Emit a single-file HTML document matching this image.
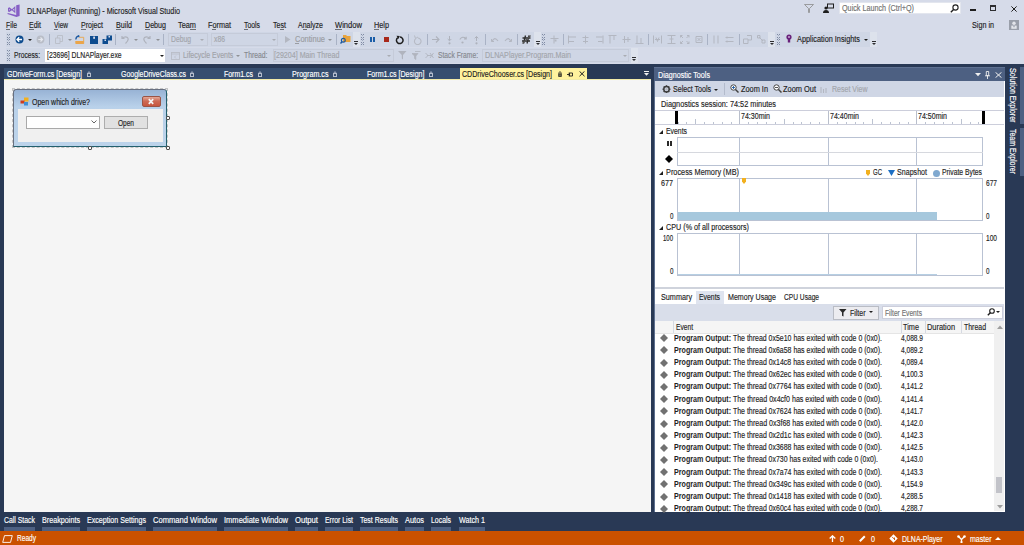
<!DOCTYPE html><html><head><meta charset="utf-8"><style>
html,body{margin:0;padding:0;}
body{width:1024px;height:545px;position:relative;overflow:hidden;background:#D6DBE9;font-family:"Liberation Sans",sans-serif;}
body>div,body>span,body>svg{position:absolute;}
.t{white-space:nowrap;line-height:1;transform-origin:0 0;-webkit-text-stroke:0.15px currentColor;}
</style></head><body>
<svg style="left:0px;top:0px" width="24" height="20" viewBox="0 0 24 20"><path d="M16.2 5.2 L19.6 4.6 L19.6 16 L16.4 16.9 L7.4 13.9 L7.8 13.1 L16.2 15 Z" fill="#865FC5"/><path d="M8 8 L9.4 7.3 L11.9 9.3 L15.3 6.1 L15.3 13.2 L11.9 10.3 L9.4 12.1 L8 11.4 Z M9.1 8.9 L9.1 10.4 L10.2 9.7 Z M12.9 9.8 L14.3 8.5 L14.3 11 Z" fill="#865FC5" fill-rule="evenodd"/></svg>
<span class="t" style="left:27px;top:7.00px;font-size:8.5px;color:#1e1e1e;transform:scaleX(0.8485);">DLNAPlayer (Running) - Microsoft Visual Studio</span>
<svg style="left:804px;top:4px" width="10" height="9" viewBox="0 0 10 9"><path d="M0.5 0.5 L9.5 0.5 L5.5 4.5 L5.5 8.5 L4.5 8.5 L4.5 4.5 Z" fill="none" stroke="#8a8a8a" stroke-width="0.8"/></svg>
<svg style="left:823px;top:3px" width="11" height="10" viewBox="0 0 11 10"><circle cx="3" cy="5" r="1.6" fill="#1e1e1e"/><path d="M0 10 Q0 7 3 7 Q6 7 6 10 Z" fill="#1e1e1e"/><rect x="4.5" y="1" width="6" height="4" fill="none" stroke="#1e1e1e" stroke-width="1"/></svg>
<div style="left:839px;top:2px;width:122px;height:12px;background:#fff;box-sizing:border-box;border:1px solid #e3e6ee;"></div>
<span class="t" style="left:842px;top:4.00px;font-size:8.5px;color:#717171;transform:scaleX(0.8491);">Quick Launch (Ctrl+Q)</span>
<svg style="left:950px;top:4px" width="9" height="9" viewBox="0 0 9 9"><circle cx="5.5" cy="3.5" r="2.6" fill="none" stroke="#1e1e1e" stroke-width="1.1"/><path d="M3.6 5.4 L0.8 8.2" stroke="#1e1e1e" stroke-width="1.4"/></svg>
<div style="left:970px;top:9px;width:5.5px;height:1.6px;background:#1e1e1e;"></div>
<div style="left:990px;top:5px;width:6px;height:6px;background:transparent;box-sizing:border-box;border:1px solid #2d2d30;border-top-width:2px;"></div>
<svg style="left:1010.5px;top:5.5px" width="6" height="6" viewBox="0 0 6 6"><path d="M0.4 0.4 L5.6 5.6 M5.6 0.4 L0.4 5.6" stroke="#1e1e1e" stroke-width="1"/></svg>
<span class="t" style="left:6px;top:21.00px;font-size:8.5px;color:#1e1e1e;transform:scaleX(0.8031);">File</span>
<div style="left:6.0px;top:29px;width:4.17px;height:1px;background:#6d6f75;"></div>
<span class="t" style="left:29px;top:21.00px;font-size:8.5px;color:#1e1e1e;transform:scaleX(0.8193);">Edit</span>
<div style="left:29.0px;top:29px;width:4.65px;height:1px;background:#6d6f75;"></div>
<span class="t" style="left:54px;top:21.00px;font-size:8.5px;color:#1e1e1e;transform:scaleX(0.7662);">View</span>
<div style="left:54.0px;top:29px;width:4.34px;height:1px;background:#6d6f75;"></div>
<span class="t" style="left:81px;top:21.00px;font-size:8.5px;color:#1e1e1e;transform:scaleX(0.8316);">Project</span>
<div style="left:81.0px;top:29px;width:4.71px;height:1px;background:#6d6f75;"></div>
<span class="t" style="left:116px;top:21.00px;font-size:8.5px;color:#1e1e1e;transform:scaleX(0.8465);">Build</span>
<div style="left:116.0px;top:29px;width:4.8px;height:1px;background:#6d6f75;"></div>
<span class="t" style="left:145px;top:21.00px;font-size:8.5px;color:#1e1e1e;transform:scaleX(0.8384);">Debug</span>
<div style="left:145.0px;top:29px;width:5.15px;height:1px;background:#6d6f75;"></div>
<span class="t" style="left:178px;top:21.00px;font-size:8.5px;color:#1e1e1e;transform:scaleX(0.8660);">Team</span>
<div style="left:189.87px;top:29px;width:6.13px;height:1px;background:#6d6f75;"></div>
<span class="t" style="left:208px;top:21.00px;font-size:8.5px;color:#1e1e1e;transform:scaleX(0.8544);">Format</span>
<div style="left:212.44px;top:29px;width:4.04px;height:1px;background:#6d6f75;"></div>
<span class="t" style="left:244px;top:21.00px;font-size:8.5px;color:#1e1e1e;transform:scaleX(0.8063);">Tools</span>
<div style="left:244.0px;top:29px;width:4.19px;height:1px;background:#6d6f75;"></div>
<span class="t" style="left:273px;top:21.00px;font-size:8.5px;color:#1e1e1e;transform:scaleX(0.8339);">Test</span>
<div style="left:280.49px;top:29px;width:3.54px;height:1px;background:#6d6f75;"></div>
<span class="t" style="left:298px;top:21.00px;font-size:8.5px;color:#1e1e1e;transform:scaleX(0.8267);">Analyze</span>
<div style="left:302.69px;top:29px;width:3.91px;height:1px;background:#6d6f75;"></div>
<span class="t" style="left:335px;top:21.00px;font-size:8.5px;color:#1e1e1e;transform:scaleX(0.8931);">Window</span>
<div style="left:335.0px;top:29px;width:7.16px;height:1px;background:#6d6f75;"></div>
<span class="t" style="left:374px;top:21.00px;font-size:8.5px;color:#1e1e1e;transform:scaleX(0.8580);">Help</span>
<div style="left:374.0px;top:29px;width:5.27px;height:1px;background:#6d6f75;"></div>
<span class="t" style="left:972px;top:21.00px;font-size:8.5px;color:#1e1e1e;transform:scaleX(0.8465);">Sign in</span>
<svg style="left:1008.5px;top:19.5px" width="10" height="10" viewBox="0 0 10 10"><rect x="0" y="0" width="10" height="10" fill="#9a9faa"/><circle cx="5" cy="3.2" r="1.7" fill="#e3e5ea"/><rect x="2.3" y="5.6" width="5.4" height="3.2" fill="#e3e5ea"/><rect x="4.4" y="5.6" width="1.2" height="1.6" fill="#9a9faa"/></svg>
<div style="left:6px;top:32px;width:864px;height:15px;background:#CFD6E5;"></div>
<div style="left:6px;top:48px;width:625px;height:15px;background:#CFD6E5;"></div>
<svg style="left:7px;top:34px" width="3" height="11" viewBox="0 0 3 11"><rect x="0" y="0" width="1" height="1" fill="#7f8aa3"/><rect x="2" y="0" width="1" height="1" fill="#7f8aa3"/><rect x="1" y="1" width="1" height="1" fill="#a3adc2"/><rect x="0" y="3" width="1" height="1" fill="#7f8aa3"/><rect x="2" y="3" width="1" height="1" fill="#7f8aa3"/><rect x="1" y="4" width="1" height="1" fill="#a3adc2"/><rect x="0" y="5" width="1" height="1" fill="#7f8aa3"/><rect x="2" y="5" width="1" height="1" fill="#7f8aa3"/><rect x="1" y="6" width="1" height="1" fill="#a3adc2"/><rect x="0" y="8" width="1" height="1" fill="#7f8aa3"/><rect x="2" y="8" width="1" height="1" fill="#7f8aa3"/><rect x="1" y="9" width="1" height="1" fill="#a3adc2"/><rect x="0" y="10" width="1" height="1" fill="#7f8aa3"/><rect x="2" y="10" width="1" height="1" fill="#7f8aa3"/></svg>
<svg style="left:15px;top:35px" width="9" height="9" viewBox="0 0 9 9"><circle cx="4.5" cy="4.5" r="4" fill="#0e4c8f"/><path d="M2 4.5 H7 M4.2 2.3 L2 4.5 L4.2 6.7" stroke="#fff" stroke-width="1.3" fill="none"/></svg>
<svg style="left:28px;top:39px" width="4" height="2" viewBox="0 0 4 2"><path d="M0 0 H4 L2 2 Z" fill="#1e1e1e"/></svg>
<svg style="left:36px;top:35px" width="9" height="9" viewBox="0 0 9 9"><circle cx="4.5" cy="4.5" r="3.9" fill="#b9bdc7"/><path d="M2.3 4.5 H6.5 M4.5 2.5 L6.5 4.5 L4.5 6.5" stroke="#e4e7ee" stroke-width="1.2" fill="none"/></svg>
<div style="left:49px;top:34px;width:1px;height:11px;background:#a9b2c5;"></div>
<svg style="left:55px;top:35px" width="8" height="9" viewBox="0 0 8 9"><path d="M0.5 3 H5 V8.5 H0.5 Z M2.5 3 V0.5 H7.5 V6.5 H5" fill="none" stroke="#b9bdc6" stroke-width="0.9"/></svg>
<svg style="left:68px;top:39px" width="4" height="2" viewBox="0 0 4 2"><path d="M0 0 H4 L2 2 Z" fill="#8f9196"/></svg>
<svg style="left:75px;top:35px" width="10" height="9" viewBox="0 0 10 9"><path d="M4 2.3 H8.7 V8.5 H0.8 V6" fill="none" stroke="#eaa54a" stroke-width="0.9"/><rect x="0.8" y="6" width="8" height="2.8" fill="#eaa54a"/><path d="M0.8 4.5 Q1 1.2 4 0.8" fill="none" stroke="#1e5aa0" stroke-width="1.3"/><path d="M2.8 0 L5 1 L3.3 2.6 Z" fill="#1e5aa0"/></svg>
<svg style="left:89.5px;top:35.5px" width="8" height="8" viewBox="0 0 8 8"><path d="M0 0 H8 V8 H0 Z" fill="#0e4c8f"/><rect x="3.2" y="0.6" width="1.8" height="2.2" fill="#d6dbe9"/></svg>
<svg style="left:101.5px;top:35px" width="10" height="9" viewBox="0 0 10 9"><rect x="4.5" y="0.5" width="5.5" height="5" fill="#0e4c8f"/><rect x="6.5" y="1" width="1.5" height="1.5" fill="#d6dbe9"/><rect x="0.5" y="4" width="5.5" height="5" fill="#0e4c8f"/><rect x="2.5" y="4.5" width="1.5" height="1.5" fill="#d6dbe9"/></svg>
<div style="left:115px;top:34px;width:1px;height:11px;background:#a9b2c5;"></div>
<svg style="left:121px;top:35px" width="9" height="9" viewBox="0 0 9 9"><path d="M1 1 V3.5 H3.5 M1.3 3.2 Q4 0.8 6.5 2.5 Q8.5 5 4.5 8.5" fill="none" stroke="#aeb2bc" stroke-width="1.2"/></svg>
<svg style="left:134px;top:39px" width="4" height="2" viewBox="0 0 4 2"><path d="M0 0 H4 L2 2 Z" fill="#8f9196"/></svg>
<svg style="left:142px;top:35px" width="9" height="9" viewBox="0 0 9 9"><path d="M8 1 V3.5 H5.5 M7.7 3.2 Q5 0.8 2.5 2.5 Q0.5 5 4.5 8.5" fill="none" stroke="#aeb2bc" stroke-width="1.2"/></svg>
<svg style="left:156px;top:39px" width="4" height="2" viewBox="0 0 4 2"><path d="M0 0 H4 L2 2 Z" fill="#8f9196"/></svg>
<div style="left:163px;top:34px;width:1px;height:11px;background:#a9b2c5;"></div>
<div style="left:168px;top:33px;width:40px;height:13px;background:transparent;box-sizing:border-box;border:1px solid #c5cbd9;"></div>
<span class="t" style="left:171px;top:35.00px;font-size:8.5px;color:#a2a5ab;transform:scaleX(0.7985);">Debug</span>
<svg style="left:200px;top:39px" width="4" height="2" viewBox="0 0 4 2"><path d="M0 0 H4 L2 2 Z" fill="#a9acb3"/></svg>
<div style="left:211px;top:33px;width:67px;height:13px;background:transparent;box-sizing:border-box;border:1px solid #c5cbd9;"></div>
<span class="t" style="left:213.5px;top:35.00px;font-size:8.5px;color:#a2a5ab;transform:scaleX(0.8026);">x86</span>
<svg style="left:272px;top:39px" width="4" height="2" viewBox="0 0 4 2"><path d="M0 0 H4 L2 2 Z" fill="#a9acb3"/></svg>
<svg style="left:284.5px;top:36px" width="6" height="7" viewBox="0 0 6 7"><path d="M0 0 L5.5 3.5 L0 7 Z" fill="#b3b7c1"/></svg>
<span class="t" style="left:294.5px;top:35.00px;font-size:8.5px;color:#9a9ca2;transform:scaleX(0.8817);">Continue</span>
<div style="left:295px;top:43px;width:4px;height:0.8px;background:#9a9ca2;"></div>
<svg style="left:328px;top:39px" width="4" height="2" viewBox="0 0 4 2"><path d="M0 0 H4 L2 2 Z" fill="#8f9196"/></svg>
<div style="left:335.5px;top:34px;width:1px;height:11px;background:#a9b2c5;"></div>
<svg style="left:340px;top:34px" width="11" height="10" viewBox="0 0 11 10"><path d="M3 1 H6 L7 2 H10.5 V8 H3 Z" fill="#e8a33d"/><circle cx="3.3" cy="6.3" r="1.9" fill="none" stroke="#1e5aa0" stroke-width="1.2"/><path d="M2 7.8 L0.5 9.5" stroke="#1e5aa0" stroke-width="1.4"/></svg>
<div style="left:353px;top:32px;width:7px;height:15px;background:#DDE2EC;"></div>
<div style="left:354px;top:41px;width:4px;height:1px;background:#2d2d30;"></div>
<svg style="left:354px;top:43px" width="4" height="2" viewBox="0 0 4 2"><path d="M0 0 H4 L2 2 Z" fill="#2d2d30"/></svg>
<svg style="left:361px;top:34px" width="3" height="11" viewBox="0 0 3 11"><rect x="0" y="0" width="1" height="1" fill="#7f8aa3"/><rect x="2" y="0" width="1" height="1" fill="#7f8aa3"/><rect x="1" y="1" width="1" height="1" fill="#a3adc2"/><rect x="0" y="3" width="1" height="1" fill="#7f8aa3"/><rect x="2" y="3" width="1" height="1" fill="#7f8aa3"/><rect x="1" y="4" width="1" height="1" fill="#a3adc2"/><rect x="0" y="5" width="1" height="1" fill="#7f8aa3"/><rect x="2" y="5" width="1" height="1" fill="#7f8aa3"/><rect x="1" y="6" width="1" height="1" fill="#a3adc2"/><rect x="0" y="8" width="1" height="1" fill="#7f8aa3"/><rect x="2" y="8" width="1" height="1" fill="#7f8aa3"/><rect x="1" y="9" width="1" height="1" fill="#a3adc2"/><rect x="0" y="10" width="1" height="1" fill="#7f8aa3"/><rect x="2" y="10" width="1" height="1" fill="#7f8aa3"/></svg>
<div style="left:370px;top:36.5px;width:2px;height:5.5px;background:#1a5da8;"></div>
<div style="left:373px;top:36.5px;width:2px;height:5.5px;background:#1a5da8;"></div>
<div style="left:383.5px;top:36.5px;width:5.5px;height:5.5px;background:#a8281a;"></div>
<svg style="left:395px;top:35px" width="9" height="10" viewBox="0 0 9 10"><path d="M2.8 2.6 A3.3 3.3 0 1 0 5 2" fill="none" stroke="#1e1e1e" stroke-width="1.5"/><path d="M1.5 0.8 L4.8 1 L3.5 4" fill="#1e1e1e"/></svg>
<div style="left:408px;top:34px;width:1px;height:11px;background:#a9b2c5;"></div>
<svg style="left:413px;top:35px" width="9" height="10" viewBox="0 0 9 10"><path d="M2.8 3.6 A3.3 3.3 0 1 0 5 3" fill="none" stroke="#b6bac4" stroke-width="1.1"/><path d="M1.5 0.5 L2.5 3.5 L5 2" fill="none" stroke="#b6bac4" stroke-width="1"/></svg>
<div style="left:426.5px;top:34px;width:1px;height:11px;background:#a9b2c5;"></div>
<svg style="left:432px;top:36px" width="8" height="7" viewBox="0 0 8 7"><path d="M0 3.5 H7 M4 0.5 L7 3.5 L4 6.5" fill="none" stroke="#aeb2bc" stroke-width="1.1"/></svg>
<svg style="left:447px;top:35.5px" width="5" height="9" viewBox="0 0 5 9"><path d="M2.5 0 V4.5 M0.7 3 L2.5 4.8 L4.3 3" fill="none" stroke="#aeb2bc" stroke-width="1"/><circle cx="2.5" cy="7.3" r="1.1" fill="#aeb2bc"/></svg>
<svg style="left:459px;top:36px" width="8" height="8" viewBox="0 0 8 8"><path d="M0.8 3.5 Q3.5 -0.5 6.8 2.5 M5 3 H7.2 V0.8" fill="none" stroke="#aeb2bc" stroke-width="1.1"/><circle cx="3.5" cy="6.5" r="1.1" fill="#aeb2bc"/></svg>
<svg style="left:474px;top:35.5px" width="5" height="9" viewBox="0 0 5 9"><path d="M2.5 5 V0.5 M0.7 2.3 L2.5 0.5 L4.3 2.3" fill="none" stroke="#aeb2bc" stroke-width="1"/><circle cx="2.5" cy="7.3" r="1.1" fill="#aeb2bc"/></svg>
<div style="left:485px;top:34px;width:1px;height:11px;background:#a9b2c5;"></div>
<svg style="left:491px;top:37px" width="8" height="5" viewBox="0 0 8 5"><path d="M1 4.5 Q3.5 -1 7 4" fill="none" stroke="#b3b7c1" stroke-width="1.1"/><path d="M0.5 2 V4.5 H3" fill="none" stroke="#b3b7c1" stroke-width="1"/></svg>
<svg style="left:504px;top:37px" width="8" height="5" viewBox="0 0 8 5"><path d="M1 4 Q4.5 -1 7 4.5" fill="none" stroke="#b3b7c1" stroke-width="1.1"/><path d="M7.5 2 V4.5 H5" fill="none" stroke="#b3b7c1" stroke-width="1"/></svg>
<div style="left:516.5px;top:34px;width:1px;height:11px;background:#a9b2c5;"></div>
<svg style="left:522px;top:35px" width="9" height="9" viewBox="0 0 9 9"><path d="M3.5 0.5 L1.5 8.5 M7 0.5 L5 8.5 M0.5 3 H8.5 M0 6 H8" fill="none" stroke="#2d2d2d" stroke-width="1.3"/><path d="M0.5 8.5 L8.5 0.5" stroke="#555" stroke-width="1.4"/></svg>
<div style="left:534px;top:32px;width:7px;height:15px;background:#DDE2EC;"></div>
<div style="left:536px;top:41px;width:4px;height:1px;background:#2d2d30;"></div>
<svg style="left:536px;top:43px" width="4" height="2" viewBox="0 0 4 2"><path d="M0 0 H4 L2 2 Z" fill="#2d2d30"/></svg>
<svg style="left:542px;top:34px" width="3" height="11" viewBox="0 0 3 11"><rect x="0" y="0" width="1" height="1" fill="#7f8aa3"/><rect x="2" y="0" width="1" height="1" fill="#7f8aa3"/><rect x="1" y="1" width="1" height="1" fill="#a3adc2"/><rect x="0" y="3" width="1" height="1" fill="#7f8aa3"/><rect x="2" y="3" width="1" height="1" fill="#7f8aa3"/><rect x="1" y="4" width="1" height="1" fill="#a3adc2"/><rect x="0" y="5" width="1" height="1" fill="#7f8aa3"/><rect x="2" y="5" width="1" height="1" fill="#7f8aa3"/><rect x="1" y="6" width="1" height="1" fill="#a3adc2"/><rect x="0" y="8" width="1" height="1" fill="#7f8aa3"/><rect x="2" y="8" width="1" height="1" fill="#7f8aa3"/><rect x="1" y="9" width="1" height="1" fill="#a3adc2"/><rect x="0" y="10" width="1" height="1" fill="#7f8aa3"/><rect x="2" y="10" width="1" height="1" fill="#7f8aa3"/></svg>
<svg style="left:549.5px;top:35px" width="9" height="9" viewBox="0 0 9 9"><path d="M4 0.5 V8.5 M0.5 3.5 H8.5" stroke="#b3b7c1" stroke-width="1"/><rect x="4.5" y="4.5" width="2" height="2" fill="#b3b7c1"/></svg>
<div style="left:562.5px;top:34px;width:1px;height:11px;background:#a9b2c5;"></div>
<svg style="left:568px;top:35px" width="9" height="9" viewBox="0 0 9 9"><path d="M0.5 0.5 V8.5 M1 2 H8 M1 6.5 H6" fill="none" stroke="#b3b7c1" stroke-width="1"/></svg>
<svg style="left:582px;top:35px" width="7" height="9" viewBox="0 0 7 9"><path d="M3.5 0.5 V8.5 M0.5 2.5 H6.5 M1 6.5 H6" fill="none" stroke="#b3b7c1" stroke-width="1"/></svg>
<svg style="left:595px;top:35px" width="9" height="9" viewBox="0 0 9 9"><path d="M8 0.5 V8.5 M1 2 H7.5 M3 6.5 H7.5" fill="none" stroke="#b3b7c1" stroke-width="1"/></svg>
<svg style="left:608px;top:35px" width="9" height="9" viewBox="0 0 9 9"><path d="M0.5 0.5 H8.5 M2 1 V8.5 M6 1 V5" fill="none" stroke="#b3b7c1" stroke-width="1"/></svg>
<svg style="left:621.5px;top:35px" width="9" height="9" viewBox="0 0 9 9"><path d="M0.5 4.5 H8.5 M2.5 1 V8 M6 2 V7" fill="none" stroke="#b3b7c1" stroke-width="1"/></svg>
<svg style="left:635px;top:35px" width="9" height="9" viewBox="0 0 9 9"><path d="M0.5 8.5 H8.5 M2 0.5 V8 M6 3 V8" fill="none" stroke="#b3b7c1" stroke-width="1"/></svg>
<div style="left:647.5px;top:34px;width:1px;height:11px;background:#a9b2c5;"></div>
<svg style="left:653px;top:35px" width="9" height="9" viewBox="0 0 9 9"><path d="M0.5 0.5 V8.5 M8.5 0.5 V8.5 M2 4.5 H7 M3 2.5 L4.5 6.5 L6 2.5" fill="none" stroke="#b3b7c1" stroke-width="1"/></svg>
<svg style="left:667px;top:35px" width="9" height="9" viewBox="0 0 9 9"><path d="M0.5 0.5 H8.5 M0.5 8.5 H8.5 M4.5 1 V8 M2.5 4 H6.5" fill="none" stroke="#b3b7c1" stroke-width="1"/></svg>
<svg style="left:680px;top:35px" width="10" height="9" viewBox="0 0 10 9"><path d="M0.5 0.5 L3 3 M0.5 0.5 H2.5 M0.5 0.5 V2.5 M9 0.5 L6.5 3 M9 0.5 H7 M9 0.5 V2.5 M0.5 8.5 L3 6 M0.5 8.5 H2.5 M0.5 8.5 V6.5 M9 8.5 L6.5 6 M9 8.5 H7 M9 8.5 V6.5" fill="none" stroke="#b3b7c1" stroke-width="1"/></svg>
<svg style="left:694.5px;top:35px" width="8" height="9" viewBox="0 0 8 9"><path d="M1 1.5 H7 V7.5 H1 Z M2.5 3 L5.5 6 M5.5 3 L2.5 6" fill="none" stroke="#b3b7c1" stroke-width="1"/></svg>
<div style="left:706.5px;top:34px;width:1px;height:11px;background:#a9b2c5;"></div>
<svg style="left:713px;top:35px" width="9" height="9" viewBox="0 0 9 9"><path d="M1 0.5 V8.5 M5 0.5 V8.5" fill="none" stroke="#b3b7c1" stroke-width="1"/></svg>
<svg style="left:725px;top:35px" width="10" height="9" viewBox="0 0 10 9"><path d="M0.5 2.5 H8.5 M0.5 6.5 H8.5 M2 1.5 V3.5 M2 5.5 V7.5" fill="none" stroke="#b3b7c1" stroke-width="1"/></svg>
<div style="left:738.5px;top:34px;width:1px;height:11px;background:#a9b2c5;"></div>
<svg style="left:743px;top:35px" width="9" height="9" viewBox="0 0 9 9"><path d="M0.5 4 H5 V8.5 H0.5 Z M4 0.5 H8.5 V5 H5" fill="none" stroke="#b3b7c1" stroke-width="1"/></svg>
<svg style="left:757px;top:35px" width="9" height="9" viewBox="0 0 9 9"><path d="M0.5 0.5 H3 V3 H0.5 Z M5 5 H8 V8 H5 Z M2 2 L6 6" fill="none" stroke="#b3b7c1" stroke-width="1"/></svg>
<div style="left:768px;top:32px;width:7px;height:15px;background:#DDE2EC;"></div>
<div style="left:770px;top:41px;width:4px;height:1px;background:#2d2d30;"></div>
<svg style="left:770px;top:43px" width="4" height="2" viewBox="0 0 4 2"><path d="M0 0 H4 L2 2 Z" fill="#2d2d30"/></svg>
<svg style="left:777px;top:34px" width="3" height="11" viewBox="0 0 3 11"><rect x="0" y="0" width="1" height="1" fill="#7f8aa3"/><rect x="2" y="0" width="1" height="1" fill="#7f8aa3"/><rect x="1" y="1" width="1" height="1" fill="#a3adc2"/><rect x="0" y="3" width="1" height="1" fill="#7f8aa3"/><rect x="2" y="3" width="1" height="1" fill="#7f8aa3"/><rect x="1" y="4" width="1" height="1" fill="#a3adc2"/><rect x="0" y="5" width="1" height="1" fill="#7f8aa3"/><rect x="2" y="5" width="1" height="1" fill="#7f8aa3"/><rect x="1" y="6" width="1" height="1" fill="#a3adc2"/><rect x="0" y="8" width="1" height="1" fill="#7f8aa3"/><rect x="2" y="8" width="1" height="1" fill="#7f8aa3"/><rect x="1" y="9" width="1" height="1" fill="#a3adc2"/><rect x="0" y="10" width="1" height="1" fill="#7f8aa3"/><rect x="2" y="10" width="1" height="1" fill="#7f8aa3"/></svg>
<svg style="left:786px;top:34px" width="6" height="10" viewBox="0 0 6 10"><circle cx="3" cy="3" r="2.6" fill="#68217a"/><rect x="1.8" y="5" width="2.4" height="3.5" fill="#68217a"/><circle cx="3" cy="3" r="1" fill="#c9a6d6"/></svg>
<span class="t" style="left:797px;top:35.00px;font-size:8.5px;color:#1e1e1e;transform:scaleX(0.8602);">Application Insights</span>
<svg style="left:864px;top:39px" width="4" height="2" viewBox="0 0 4 2"><path d="M0 0 H4 L2 2 Z" fill="#1e1e1e"/></svg>
<div style="left:870px;top:32px;width:7px;height:15px;background:#DDE2EC;"></div>
<div style="left:872px;top:41px;width:4px;height:1px;background:#2d2d30;"></div>
<svg style="left:872px;top:43px" width="4" height="2" viewBox="0 0 4 2"><path d="M0 0 H4 L2 2 Z" fill="#2d2d30"/></svg>
<svg style="left:7px;top:50px" width="3" height="11" viewBox="0 0 3 11"><rect x="0" y="0" width="1" height="1" fill="#7f8aa3"/><rect x="2" y="0" width="1" height="1" fill="#7f8aa3"/><rect x="1" y="1" width="1" height="1" fill="#a3adc2"/><rect x="0" y="3" width="1" height="1" fill="#7f8aa3"/><rect x="2" y="3" width="1" height="1" fill="#7f8aa3"/><rect x="1" y="4" width="1" height="1" fill="#a3adc2"/><rect x="0" y="5" width="1" height="1" fill="#7f8aa3"/><rect x="2" y="5" width="1" height="1" fill="#7f8aa3"/><rect x="1" y="6" width="1" height="1" fill="#a3adc2"/><rect x="0" y="8" width="1" height="1" fill="#7f8aa3"/><rect x="2" y="8" width="1" height="1" fill="#7f8aa3"/><rect x="1" y="9" width="1" height="1" fill="#a3adc2"/><rect x="0" y="10" width="1" height="1" fill="#7f8aa3"/><rect x="2" y="10" width="1" height="1" fill="#7f8aa3"/></svg>
<span class="t" style="left:14px;top:51.00px;font-size:8.5px;color:#1e1e1e;transform:scaleX(0.7863);">Process:</span>
<div style="left:45px;top:49px;width:120px;height:13px;background:#ffffff;"></div>
<span class="t" style="left:47px;top:51.00px;font-size:8.5px;color:#1e1e1e;transform:scaleX(0.8014);">[23696] DLNAPlayer.exe</span>
<svg style="left:160px;top:55px" width="4" height="2" viewBox="0 0 4 2"><path d="M0 0 H4 L2 2 Z" fill="#1e1e1e"/></svg>
<svg style="left:170.5px;top:51.5px" width="9" height="8" viewBox="0 0 9 8"><rect x="0.5" y="0.5" width="8" height="7" fill="none" stroke="#b9bdc6" stroke-width="0.9"/><path d="M0.5 2 H8.5 M5 3.5 L3.5 5 L5 6.5" fill="none" stroke="#b9bdc6" stroke-width="0.8"/></svg>
<span class="t" style="left:182.8px;top:51.00px;font-size:8.5px;color:#9fa2a8;transform:scaleX(0.8190);">Lifecycle Events</span>
<svg style="left:236px;top:55px" width="4" height="2" viewBox="0 0 4 2"><path d="M0 0 H4 L2 2 Z" fill="#8f9196"/></svg>
<span class="t" style="left:244.4px;top:51.00px;font-size:8.5px;color:#85888e;transform:scaleX(0.7988);">Thread:</span>
<div style="left:272.5px;top:49px;width:121px;height:13px;background:transparent;box-sizing:border-box;border:1px solid #c5cbd9;"></div>
<span class="t" style="left:274.4px;top:51.00px;font-size:8.5px;color:#a2a5ab;transform:scaleX(0.8354);">[29204] Main Thread</span>
<svg style="left:387px;top:55px" width="4" height="2" viewBox="0 0 4 2"><path d="M0 0 H4 L2 2 Z" fill="#a9acb3"/></svg>
<svg style="left:398px;top:51px" width="9" height="9" viewBox="0 0 9 9"><path d="M0 0 H8.5 L5 4 V8.5 L3.8 7.5 V4 Z" fill="#b0b4be"/></svg>
<svg style="left:411.5px;top:51px" width="9" height="9" viewBox="0 0 9 9"><path d="M0 2.5 H6 L3.8 5 V8.5 L2.6 7.5 V5 Z M3 0.5 H8.5" fill="#b0b4be" stroke="#b0b4be" stroke-width="0.8"/></svg>
<svg style="left:425px;top:52px" width="9" height="7" viewBox="0 0 9 7"><path d="M0.5 1 L3 3.5 L0.5 6 M5 1 L8.5 6 M8.5 1 L5 6 M2 3.5 H6" fill="none" stroke="#b0b4be" stroke-width="0.9"/></svg>
<span class="t" style="left:438px;top:51.00px;font-size:8.5px;color:#85888e;transform:scaleX(0.7914);">Stack Frame:</span>
<div style="left:482px;top:49px;width:146.5px;height:13px;background:transparent;box-sizing:border-box;border:1px solid #c5cbd9;"></div>
<span class="t" style="left:485px;top:51.00px;font-size:8.5px;color:#a2a5ab;transform:scaleX(0.8428);">DLNAPlayer.Program.Main</span>
<svg style="left:623px;top:55px" width="4" height="2" viewBox="0 0 4 2"><path d="M0 0 H4 L2 2 Z" fill="#a9acb3"/></svg>
<div style="left:631px;top:48px;width:7px;height:15px;background:#DDE2EC;"></div>
<div style="left:632px;top:57px;width:4px;height:1px;background:#2d2d30;"></div>
<svg style="left:632px;top:59px" width="4" height="2" viewBox="0 0 4 2"><path d="M0 0 H4 L2 2 Z" fill="#2d2d30"/></svg>
<div style="left:0px;top:64px;width:1024px;height:467px;background:#293955;"></div>
<div style="left:4px;top:68px;width:456px;height:11px;background:#364E6F;"></div>
<div style="left:460px;top:68px;width:127px;height:12px;background:#FFF29D;"></div>
<div style="left:4px;top:79px;width:646.5px;height:1px;background:#F2EBA9;"></div>
<div style="left:4px;top:80px;width:646.5px;height:432px;background:#F5F5F5;"></div>
<span class="t" style="left:7px;top:70.00px;font-size:8.5px;color:#ffffff;transform:scaleX(0.8271);">GDriveForm.cs [Design]</span>
<svg style="left:86.5px;top:71px" width="4" height="6" viewBox="0 0 4 6"><rect x="0.45" y="2.6" width="3.1" height="2.9" fill="none" stroke="#c3cad8" stroke-width="0.9"/><path d="M1 2.6 V1.5 Q2 0 3 1.5 V2.6" fill="none" stroke="#c3cad8" stroke-width="0.8"/></svg>
<span class="t" style="left:121px;top:70.00px;font-size:8.5px;color:#ffffff;transform:scaleX(0.8190);">GoogleDriveClass.cs</span>
<svg style="left:189.5px;top:71px" width="4" height="6" viewBox="0 0 4 6"><rect x="0.45" y="2.6" width="3.1" height="2.9" fill="none" stroke="#c3cad8" stroke-width="0.9"/><path d="M1 2.6 V1.5 Q2 0 3 1.5 V2.6" fill="none" stroke="#c3cad8" stroke-width="0.8"/></svg>
<span class="t" style="left:224px;top:70.00px;font-size:8.5px;color:#ffffff;transform:scaleX(0.8187);">Form1.cs</span>
<svg style="left:257.5px;top:71px" width="4" height="6" viewBox="0 0 4 6"><rect x="0.45" y="2.6" width="3.1" height="2.9" fill="none" stroke="#c3cad8" stroke-width="0.9"/><path d="M1 2.6 V1.5 Q2 0 3 1.5 V2.6" fill="none" stroke="#c3cad8" stroke-width="0.8"/></svg>
<span class="t" style="left:291.5px;top:70.00px;font-size:8.5px;color:#ffffff;transform:scaleX(0.8399);">Program.cs</span>
<svg style="left:332.5px;top:71px" width="4" height="6" viewBox="0 0 4 6"><rect x="0.45" y="2.6" width="3.1" height="2.9" fill="none" stroke="#c3cad8" stroke-width="0.9"/><path d="M1 2.6 V1.5 Q2 0 3 1.5 V2.6" fill="none" stroke="#c3cad8" stroke-width="0.8"/></svg>
<span class="t" style="left:366.5px;top:70.00px;font-size:8.5px;color:#ffffff;transform:scaleX(0.8338);">Form1.cs [Design]</span>
<svg style="left:428.5px;top:71px" width="4" height="6" viewBox="0 0 4 6"><rect x="0.45" y="2.6" width="3.1" height="2.9" fill="none" stroke="#c3cad8" stroke-width="0.9"/><path d="M1 2.6 V1.5 Q2 0 3 1.5 V2.6" fill="none" stroke="#c3cad8" stroke-width="0.8"/></svg>
<span class="t" style="left:462px;top:70.00px;font-size:8.5px;color:#1e1e1e;transform:scaleX(0.8320);">CDDriveChooser.cs [Design]</span>
<svg style="left:557.5px;top:71px" width="4" height="6" viewBox="0 0 4 6"><rect x="0.3" y="2.5" width="3.4" height="3.3" fill="#1e1e1e"/><path d="M0.9 2.6 V1.5 Q2 -0.2 3.1 1.5 V2.6" fill="none" stroke="#1e1e1e" stroke-width="0.8"/><rect x="1.5" y="3.5" width="1" height="1.2" fill="#fff29d"/></svg>
<svg style="left:567px;top:71.5px" width="6" height="5" viewBox="0 0 6 5"><path d="M0 2.5 H2 M2.2 0.5 V4.5 M2.5 1 H5.5 V4 H2.5 Z" fill="none" stroke="#1e1e1e" stroke-width="0.9"/></svg>
<svg style="left:578.5px;top:71px" width="6" height="5.5" viewBox="0 0 6 5.5"><path d="M0.5 0.3 L5.5 5.2 M5.5 0.3 L0.5 5.2" stroke="#1e1e1e" stroke-width="1"/></svg>
<div style="left:12px;top:88px;width:156px;height:60px;background:transparent;box-sizing:border-box;border:1px dashed #c4c4c4;"></div>
<div style="left:13px;top:89px;width:154px;height:58px;box-sizing:border-box;border:1px solid #687080;border-right-color:#23606e;border-bottom-color:#23606e;border-radius:3px 3px 0 0;background:linear-gradient(#98b3d5,#b9d1ea 30%,#bcd3ea);"></div>
<div style="left:18px;top:109px;width:145px;height:33px;background:#F0F0F0;"></div>
<svg style="left:20px;top:97px" width="9" height="9" viewBox="0 0 9 9"><rect x="4" y="0.5" width="4.5" height="4" fill="#f2b01e"/><rect x="0.5" y="3.5" width="4" height="3" fill="#d03c1c"/><rect x="4" y="5" width="4" height="3.5" fill="#3f8fd6"/></svg>
<span class="t" style="left:32px;top:98.00px;font-size:8.5px;color:#1e1e1e;transform:scaleX(0.8239);">Open which drive?</span>
<div style="left:141.5px;top:96px;width:19px;height:10.5px;box-sizing:border-box;border:1px solid #9a5446;border-radius:2px;background:linear-gradient(#e3a999,#cd6a55 45%,#c7563f);"></div>
<svg style="left:147px;top:97.5px" width="8" height="7" viewBox="0 0 8 7"><path d="M1.8 1.2 L6.2 5.8 M6.2 1.2 L1.8 5.8" stroke="#f4f4f4" stroke-width="1.7"/></svg>
<div style="left:25.5px;top:116px;width:74px;height:12.5px;background:#ffffff;box-sizing:border-box;border:1px solid #a9a9a9;"></div>
<svg style="left:91px;top:120px" width="6" height="4" viewBox="0 0 6 4"><path d="M0.5 0.5 L3 3 L5.5 0.5" fill="none" stroke="#555" stroke-width="0.9"/></svg>
<div style="left:103.5px;top:116px;width:44.5px;height:12.5px;background:#E1E1E1;box-sizing:border-box;border:1px solid #adadad;"></div>
<span class="t" style="left:118px;top:119.00px;font-size:8.5px;color:#1e1e1e;transform:scaleX(0.7695);">Open</span>
<div style="left:166px;top:115.5px;width:4px;height:4px;background:#ffffff;box-sizing:border-box;border:1px solid #505050;border-radius:1px;"></div>
<div style="left:88px;top:145.5px;width:4px;height:4px;background:#ffffff;box-sizing:border-box;border:1px solid #505050;border-radius:1px;"></div>
<div style="left:166px;top:145.5px;width:4px;height:4px;background:#ffffff;box-sizing:border-box;border:1px solid #505050;border-radius:1px;"></div>
<div style="left:654px;top:68px;width:351px;height:444px;background:#ffffff;box-sizing:border-box;border-left:1px solid #5d6f8f;"></div>
<div style="left:654px;top:68px;width:351px;height:13px;background:#4D6082;"></div>
<span class="t" style="left:658px;top:71.00px;font-size:8.5px;color:#ffffff;transform:scaleX(0.8423);">Diagnostic Tools</span>
<div style="left:655px;top:81px;width:349px;height:16px;background:#CFD6E5;"></div>
<svg style="left:661.5px;top:84.8px" width="9" height="8.4" viewBox="0 0 9 9"><circle cx="4.5" cy="4.5" r="2.9" fill="none" stroke="#3c3c3c" stroke-width="1.5"/><path d="M4.5 0.3 V2 M4.5 7 V8.7 M0.3 4.5 H2 M7 4.5 H8.7 M1.5 1.5 L2.6 2.6 M6.4 6.4 L7.5 7.5 M7.5 1.5 L6.4 2.6 M2.6 6.4 L1.5 7.5" stroke="#3c3c3c" stroke-width="1.5"/><circle cx="4.5" cy="4.5" r="1.3" fill="#b5b8bf"/></svg>
<span class="t" style="left:673px;top:85.00px;font-size:8.5px;color:#1e1e1e;transform:scaleX(0.8319);">Select Tools</span>
<svg style="left:714px;top:89px" width="4" height="2" viewBox="0 0 4 2"><path d="M0 0 H4 L2 2 Z" fill="#1e1e1e"/></svg>
<div style="left:724px;top:83px;width:1px;height:12px;background:#b3bbcc;"></div>
<svg style="left:730px;top:84px" width="9" height="9" viewBox="0 0 9 9"><circle cx="3.5" cy="3.5" r="2.7" fill="#fff" stroke="#424242" stroke-width="1"/><path d="M5.5 5.5 L8.5 8.5" stroke="#424242" stroke-width="1.5"/><path d="M3.5 2 V5 M2 3.5 H5" stroke="#1e5aa0" stroke-width="0.9"/></svg>
<span class="t" style="left:741px;top:85.00px;font-size:8.5px;color:#1e1e1e;transform:scaleX(0.8660);">Zoom In</span>
<svg style="left:773px;top:84px" width="9" height="9" viewBox="0 0 9 9"><circle cx="3.5" cy="3.5" r="2.7" fill="#fff" stroke="#424242" stroke-width="1"/><path d="M5.5 5.5 L8.5 8.5" stroke="#424242" stroke-width="1.5"/><path d="M2 3.5 H5" stroke="#424242" stroke-width="0.9"/></svg>
<span class="t" style="left:783px;top:85.00px;font-size:8.5px;color:#1e1e1e;transform:scaleX(0.8733);">Zoom Out</span>
<svg style="left:820px;top:84px" width="8" height="9" viewBox="0 0 8 9"><path d="M1 3 V9 M3.5 5 V9 M6 4 V9" stroke="#b3b7c1" stroke-width="1.1"/></svg>
<span class="t" style="left:831.5px;top:85.00px;font-size:8.5px;color:#a2a5ab;transform:scaleX(0.8287);">Reset View</span>
<span class="t" style="left:661px;top:100.00px;font-size:8.5px;color:#1e1e1e;transform:scaleX(0.8631);">Diagnostics session: 74:52 minutes</span>
<div style="left:655px;top:110px;width:349px;height:1px;background:#cccedb;"></div>
<div style="left:655px;top:124px;width:349px;height:1px;background:#cccedb;"></div>
<div style="left:675px;top:111px;width:3px;height:13px;background:#000;"></div>
<div style="left:982px;top:111px;width:3px;height:13px;background:#000;"></div>
<div style="left:678px;top:121.5px;width:1px;height:2.5px;background:#bcc3d1;"></div>
<div style="left:686px;top:121.5px;width:1px;height:2.5px;background:#bcc3d1;"></div>
<div style="left:695px;top:119px;width:1px;height:5px;background:#bcc3d1;"></div>
<div style="left:704px;top:121.5px;width:1px;height:2.5px;background:#bcc3d1;"></div>
<div style="left:713px;top:121.5px;width:1px;height:2.5px;background:#bcc3d1;"></div>
<div style="left:722px;top:121.5px;width:1px;height:2.5px;background:#bcc3d1;"></div>
<div style="left:731px;top:121.5px;width:1px;height:2.5px;background:#bcc3d1;"></div>
<div style="left:739px;top:119px;width:1px;height:5px;background:#bcc3d1;"></div>
<div style="left:748px;top:121.5px;width:1px;height:2.5px;background:#bcc3d1;"></div>
<div style="left:757px;top:121.5px;width:1px;height:2.5px;background:#bcc3d1;"></div>
<div style="left:766px;top:121.5px;width:1px;height:2.5px;background:#bcc3d1;"></div>
<div style="left:775px;top:121.5px;width:1px;height:2.5px;background:#bcc3d1;"></div>
<div style="left:784px;top:119px;width:1px;height:5px;background:#bcc3d1;"></div>
<div style="left:793px;top:121.5px;width:1px;height:2.5px;background:#bcc3d1;"></div>
<div style="left:801px;top:121.5px;width:1px;height:2.5px;background:#bcc3d1;"></div>
<div style="left:810px;top:121.5px;width:1px;height:2.5px;background:#bcc3d1;"></div>
<div style="left:819px;top:121.5px;width:1px;height:2.5px;background:#bcc3d1;"></div>
<div style="left:828px;top:119px;width:1px;height:5px;background:#bcc3d1;"></div>
<div style="left:837px;top:121.5px;width:1px;height:2.5px;background:#bcc3d1;"></div>
<div style="left:846px;top:121.5px;width:1px;height:2.5px;background:#bcc3d1;"></div>
<div style="left:855px;top:121.5px;width:1px;height:2.5px;background:#bcc3d1;"></div>
<div style="left:863px;top:121.5px;width:1px;height:2.5px;background:#bcc3d1;"></div>
<div style="left:872px;top:119px;width:1px;height:5px;background:#bcc3d1;"></div>
<div style="left:881px;top:121.5px;width:1px;height:2.5px;background:#bcc3d1;"></div>
<div style="left:890px;top:121.5px;width:1px;height:2.5px;background:#bcc3d1;"></div>
<div style="left:899px;top:121.5px;width:1px;height:2.5px;background:#bcc3d1;"></div>
<div style="left:908px;top:121.5px;width:1px;height:2.5px;background:#bcc3d1;"></div>
<div style="left:916px;top:119px;width:1px;height:5px;background:#bcc3d1;"></div>
<div style="left:925px;top:121.5px;width:1px;height:2.5px;background:#bcc3d1;"></div>
<div style="left:934px;top:121.5px;width:1px;height:2.5px;background:#bcc3d1;"></div>
<div style="left:943px;top:121.5px;width:1px;height:2.5px;background:#bcc3d1;"></div>
<div style="left:952px;top:121.5px;width:1px;height:2.5px;background:#bcc3d1;"></div>
<div style="left:961px;top:119px;width:1px;height:5px;background:#bcc3d1;"></div>
<div style="left:970px;top:121.5px;width:1px;height:2.5px;background:#bcc3d1;"></div>
<div style="left:978px;top:121.5px;width:1px;height:2.5px;background:#bcc3d1;"></div>
<div style="left:739px;top:111px;width:1px;height:13px;background:#b9bfcc;"></div>
<span class="t" style="left:741px;top:112.00px;font-size:8.5px;color:#1e1e1e;transform:scaleX(0.8293);">74:30min</span>
<div style="left:827.5px;top:111px;width:1px;height:13px;background:#b9bfcc;"></div>
<span class="t" style="left:829.5px;top:112.00px;font-size:8.5px;color:#1e1e1e;transform:scaleX(0.8293);">74:40min</span>
<div style="left:916px;top:111px;width:1px;height:13px;background:#b9bfcc;"></div>
<span class="t" style="left:918px;top:112.00px;font-size:8.5px;color:#1e1e1e;transform:scaleX(0.8293);">74:50min</span>
<svg style="left:659px;top:130px" width="4" height="4" viewBox="0 0 4 4"><path d="M4 0 V4 H0 Z" fill="#1e1e1e"/></svg>
<span class="t" style="left:665.5px;top:127.00px;font-size:8.5px;color:#1e1e1e;transform:scaleX(0.8081);">Events</span>
<div style="left:677px;top:137px;width:306px;height:29px;background:#ffffff;box-sizing:border-box;border:1px solid #b9c2d3;"></div>
<div style="left:739px;top:137px;width:1px;height:29px;background:#b9c2d3;"></div>
<div style="left:827.5px;top:137px;width:1px;height:29px;background:#b9c2d3;"></div>
<div style="left:916px;top:137px;width:1px;height:29px;background:#b9c2d3;"></div>
<div style="left:677px;top:151.5px;width:306px;height:1.5px;background:#d6d8de;"></div>
<div style="left:666.5px;top:141px;width:2px;height:5px;background:#2a2a2a;"></div>
<div style="left:669.5px;top:141px;width:2px;height:5px;background:#2a2a2a;"></div>
<svg style="left:665px;top:154.5px" width="8" height="8" viewBox="0 0 8 8"><path d="M4 0 L8 4 L4 8 L0 4 Z" fill="#000"/></svg>
<svg style="left:659px;top:171px" width="4" height="4" viewBox="0 0 4 4"><path d="M4 0 V4 H0 Z" fill="#1e1e1e"/></svg>
<span class="t" style="left:665.5px;top:168.00px;font-size:8.5px;color:#1e1e1e;transform:scaleX(0.8635);">Process Memory (MB)</span>
<svg style="left:866px;top:170px" width="4" height="6" viewBox="0 0 4 6"><path d="M0 0 H4 V3.5 L2 6 L0 3.5 Z" fill="#f2b01e"/></svg>
<span class="t" style="left:873px;top:168.00px;font-size:8.5px;color:#1e1e1e;transform:scaleX(0.7059);">GC</span>
<svg style="left:888px;top:170px" width="7" height="6" viewBox="0 0 7 6"><path d="M0 0 H7 L3.5 6 Z" fill="#1c6fc4"/></svg>
<span class="t" style="left:897px;top:168.00px;font-size:8.5px;color:#1e1e1e;transform:scaleX(0.8352);">Snapshot</span>
<svg style="left:933px;top:169.5px" width="7" height="7" viewBox="0 0 7 7"><circle cx="3.5" cy="3.5" r="3.5" fill="#80a9d0"/></svg>
<span class="t" style="left:942px;top:168.00px;font-size:8.5px;color:#1e1e1e;transform:scaleX(0.7988);">Private Bytes</span>
<div style="left:677px;top:178px;width:306px;height:43px;background:#ffffff;box-sizing:border-box;border:1px solid #b9c2d3;"></div>
<div style="left:739px;top:178px;width:1px;height:43px;background:#b9c2d3;"></div>
<div style="left:827.5px;top:178px;width:1px;height:43px;background:#b9c2d3;"></div>
<div style="left:916px;top:178px;width:1px;height:43px;background:#b9c2d3;"></div>
<div style="left:678px;top:212px;width:259px;height:8px;background:#a6c8dd;"></div>
<svg style="left:742px;top:178px" width="4" height="6" viewBox="0 0 4 6"><path d="M0 0 H4 V3.5 L2 6 L0 3.5 Z" fill="#f2b01e"/></svg>
<span class="t" style="left:661px;top:179.00px;font-size:8.5px;color:#1e1e1e;transform:scaleX(0.8461);">677</span>
<span class="t" style="left:670px;top:212.00px;font-size:8.5px;color:#1e1e1e;transform:scaleX(0.7404);">0</span>
<span class="t" style="left:986px;top:179.00px;font-size:8.5px;color:#1e1e1e;transform:scaleX(0.7756);">677</span>
<span class="t" style="left:986px;top:212.00px;font-size:8.5px;color:#1e1e1e;transform:scaleX(0.7404);">0</span>
<svg style="left:659px;top:226px" width="4" height="4" viewBox="0 0 4 4"><path d="M4 0 V4 H0 Z" fill="#1e1e1e"/></svg>
<span class="t" style="left:665.5px;top:223.00px;font-size:8.5px;color:#1e1e1e;transform:scaleX(0.8489);">CPU (% of all processors)</span>
<div style="left:677px;top:233px;width:306px;height:43px;background:#ffffff;box-sizing:border-box;border:1px solid #b9c2d3;"></div>
<div style="left:739px;top:233px;width:1px;height:43px;background:#b9c2d3;"></div>
<div style="left:827.5px;top:233px;width:1px;height:43px;background:#b9c2d3;"></div>
<div style="left:916px;top:233px;width:1px;height:43px;background:#b9c2d3;"></div>
<div style="left:678px;top:274px;width:259px;height:1px;background:#b6cfe3;"></div>
<span class="t" style="left:663px;top:234.00px;font-size:8.5px;color:#1e1e1e;transform:scaleX(0.7051);">100</span>
<span class="t" style="left:670px;top:267.00px;font-size:8.5px;color:#1e1e1e;transform:scaleX(0.7404);">0</span>
<span class="t" style="left:986px;top:234.00px;font-size:8.5px;color:#1e1e1e;transform:scaleX(0.7756);">100</span>
<span class="t" style="left:986px;top:267.00px;font-size:8.5px;color:#1e1e1e;transform:scaleX(0.7404);">0</span>
<div style="left:655px;top:287px;width:349px;height:1.5px;background:#cfd3dc;"></div>
<div style="left:696px;top:291px;width:27.5px;height:13px;background:#dfe4ef;"></div>
<span class="t" style="left:661px;top:293.00px;font-size:8.5px;color:#1e1e1e;transform:scaleX(0.8524);">Summary</span>
<span class="t" style="left:699px;top:293.00px;font-size:8.5px;color:#1e1e1e;transform:scaleX(0.8081);">Events</span>
<span class="t" style="left:728px;top:293.00px;font-size:8.5px;color:#1e1e1e;transform:scaleX(0.8329);">Memory Usage</span>
<span class="t" style="left:784px;top:293.00px;font-size:8.5px;color:#1e1e1e;transform:scaleX(0.7799);">CPU Usage</span>
<div style="left:655px;top:304px;width:349px;height:17px;background:#D9DEEA;"></div>
<div style="left:833px;top:306px;width:46px;height:13.5px;background:#ECECF0;box-sizing:border-box;border:1px solid #b9bcc4;"></div>
<svg style="left:839px;top:309px" width="7.5" height="7.5" viewBox="0 0 7.5 7.5"><path d="M0 0 H7.5 L4.5 3.5 V7.5 L3 6.8 V3.5 Z" fill="#2a2a2a"/></svg>
<span class="t" style="left:849.5px;top:309.00px;font-size:8.5px;color:#1e1e1e;transform:scaleX(0.8206);">Filter</span>
<svg style="left:869px;top:311px" width="4" height="2" viewBox="0 0 4 2"><path d="M0 0 H4 L2 2 Z" fill="#1e1e1e"/></svg>
<div style="left:881.5px;top:306px;width:121px;height:13px;background:#ffffff;box-sizing:border-box;border:1px solid #cccedb;"></div>
<span class="t" style="left:885px;top:309.00px;font-size:8.5px;color:#717171;transform:scaleX(0.7833);">Filter Events</span>
<svg style="left:987px;top:308px" width="8" height="8" viewBox="0 0 8 8"><circle cx="5" cy="3" r="2.3" fill="none" stroke="#1e1e1e" stroke-width="1.1"/><path d="M3.3 4.7 L0.8 7.2" stroke="#1e1e1e" stroke-width="1.4"/></svg>
<svg style="left:996px;top:311px" width="4" height="2" viewBox="0 0 4 2"><path d="M0 0 H4 L2 2 Z" fill="#1e1e1e"/></svg>
<div style="left:655px;top:321px;width:339px;height:12px;background:#F5F5F5;"></div>
<div style="left:655px;top:333px;width:339px;height:1px;background:#e5e5e5;"></div>
<div style="left:673px;top:321px;width:1px;height:12px;background:#d5d9e2;"></div>
<div style="left:900.5px;top:321px;width:1px;height:12px;background:#d5d9e2;"></div>
<div style="left:925px;top:321px;width:1px;height:12px;background:#d5d9e2;"></div>
<div style="left:961px;top:321px;width:1px;height:12px;background:#d5d9e2;"></div>
<span class="t" style="left:676px;top:323.00px;font-size:8.5px;color:#1e1e1e;transform:scaleX(0.7821);">Event</span>
<span class="t" style="left:903px;top:323.00px;font-size:8.5px;color:#1e1e1e;transform:scaleX(0.8614);">Time</span>
<span class="t" style="left:927px;top:323.00px;font-size:8.5px;color:#1e1e1e;transform:scaleX(0.8715);">Duration</span>
<span class="t" style="left:964px;top:323.00px;font-size:8.5px;color:#1e1e1e;transform:scaleX(0.8168);">Thread</span>
<div style="left:994px;top:321px;width:10px;height:190px;background:#F0F0F0;"></div>
<svg style="left:996.5px;top:325px" width="6" height="4" viewBox="0 0 6 4"><path d="M0 4 L3 0.5 L6 4 Z" fill="#9e9e9e"/></svg>
<svg style="left:996.5px;top:505px" width="6" height="4" viewBox="0 0 6 4"><path d="M0 0 L3 3.5 L6 0 Z" fill="#9e9e9e"/></svg>
<div style="left:996px;top:477px;width:6px;height:16px;background:#c2c3c9;"></div>
<svg style="left:660px;top:334.30px" width="8" height="8" viewBox="0 0 8 8"><path d="M4 0 L8 4 L4 8 L0 4 Z" fill="#717171"/></svg>
<span class="t" style="left:673.5px;top:334.00px;font-size:8.5px;color:#1e1e1e;font-weight:bold;-webkit-text-stroke:0;transform:scaleX(0.8383);">Program Output:</span>
<span class="t" style="left:732.5px;top:334.00px;font-size:8.5px;color:#1e1e1e;transform:scaleX(0.8190);">The thread 0x5e10 has exited with code 0 (0x0).</span>
<span class="t" style="left:901px;top:334.00px;font-size:8.5px;color:#1e1e1e;transform:scaleX(0.7757);">4,088.9</span>
<svg style="left:660px;top:346.48px" width="8" height="8" viewBox="0 0 8 8"><path d="M4 0 L8 4 L4 8 L0 4 Z" fill="#717171"/></svg>
<span class="t" style="left:673.5px;top:346.00px;font-size:8.5px;color:#1e1e1e;font-weight:bold;-webkit-text-stroke:0;transform:scaleX(0.8383);">Program Output:</span>
<span class="t" style="left:732.5px;top:346.00px;font-size:8.5px;color:#1e1e1e;transform:scaleX(0.8190);">The thread 0x6a58 has exited with code 0 (0x0).</span>
<span class="t" style="left:901px;top:346.00px;font-size:8.5px;color:#1e1e1e;transform:scaleX(0.7757);">4,089.2</span>
<svg style="left:660px;top:358.66px" width="8" height="8" viewBox="0 0 8 8"><path d="M4 0 L8 4 L4 8 L0 4 Z" fill="#717171"/></svg>
<span class="t" style="left:673.5px;top:358.00px;font-size:8.5px;color:#1e1e1e;font-weight:bold;-webkit-text-stroke:0;transform:scaleX(0.8383);">Program Output:</span>
<span class="t" style="left:732.5px;top:358.00px;font-size:8.5px;color:#1e1e1e;transform:scaleX(0.8212);">The thread 0x14c8 has exited with code 0 (0x0).</span>
<span class="t" style="left:901px;top:358.00px;font-size:8.5px;color:#1e1e1e;transform:scaleX(0.7757);">4,089.4</span>
<svg style="left:660px;top:370.84px" width="8" height="8" viewBox="0 0 8 8"><path d="M4 0 L8 4 L4 8 L0 4 Z" fill="#717171"/></svg>
<span class="t" style="left:673.5px;top:370.00px;font-size:8.5px;color:#1e1e1e;font-weight:bold;-webkit-text-stroke:0;transform:scaleX(0.8383);">Program Output:</span>
<span class="t" style="left:732.5px;top:370.00px;font-size:8.5px;color:#1e1e1e;transform:scaleX(0.8212);">The thread 0x62ec has exited with code 0 (0x0).</span>
<span class="t" style="left:901px;top:370.00px;font-size:8.5px;color:#1e1e1e;transform:scaleX(0.7757);">4,100.3</span>
<svg style="left:660px;top:383.02px" width="8" height="8" viewBox="0 0 8 8"><path d="M4 0 L8 4 L4 8 L0 4 Z" fill="#717171"/></svg>
<span class="t" style="left:673.5px;top:382.00px;font-size:8.5px;color:#1e1e1e;font-weight:bold;-webkit-text-stroke:0;transform:scaleX(0.8383);">Program Output:</span>
<span class="t" style="left:732.5px;top:382.00px;font-size:8.5px;color:#1e1e1e;transform:scaleX(0.8190);">The thread 0x7764 has exited with code 0 (0x0).</span>
<span class="t" style="left:901px;top:382.00px;font-size:8.5px;color:#1e1e1e;transform:scaleX(0.7757);">4,141.2</span>
<svg style="left:660px;top:395.20px" width="8" height="8" viewBox="0 0 8 8"><path d="M4 0 L8 4 L4 8 L0 4 Z" fill="#717171"/></svg>
<span class="t" style="left:673.5px;top:395.00px;font-size:8.5px;color:#1e1e1e;font-weight:bold;-webkit-text-stroke:0;transform:scaleX(0.8383);">Program Output:</span>
<span class="t" style="left:732.5px;top:395.00px;font-size:8.5px;color:#1e1e1e;transform:scaleX(0.8321);">The thread 0x4cf0 has exited with code 0 (0x0).</span>
<span class="t" style="left:901px;top:395.00px;font-size:8.5px;color:#1e1e1e;transform:scaleX(0.7757);">4,141.4</span>
<svg style="left:660px;top:407.38px" width="8" height="8" viewBox="0 0 8 8"><path d="M4 0 L8 4 L4 8 L0 4 Z" fill="#717171"/></svg>
<span class="t" style="left:673.5px;top:407.00px;font-size:8.5px;color:#1e1e1e;font-weight:bold;-webkit-text-stroke:0;transform:scaleX(0.8383);">Program Output:</span>
<span class="t" style="left:732.5px;top:407.00px;font-size:8.5px;color:#1e1e1e;transform:scaleX(0.8190);">The thread 0x7624 has exited with code 0 (0x0).</span>
<span class="t" style="left:901px;top:407.00px;font-size:8.5px;color:#1e1e1e;transform:scaleX(0.7757);">4,141.7</span>
<svg style="left:660px;top:419.56px" width="8" height="8" viewBox="0 0 8 8"><path d="M4 0 L8 4 L4 8 L0 4 Z" fill="#717171"/></svg>
<span class="t" style="left:673.5px;top:419.00px;font-size:8.5px;color:#1e1e1e;font-weight:bold;-webkit-text-stroke:0;transform:scaleX(0.8383);">Program Output:</span>
<span class="t" style="left:732.5px;top:419.00px;font-size:8.5px;color:#1e1e1e;transform:scaleX(0.8298);">The thread 0x3f68 has exited with code 0 (0x0).</span>
<span class="t" style="left:901px;top:419.00px;font-size:8.5px;color:#1e1e1e;transform:scaleX(0.7757);">4,142.0</span>
<svg style="left:660px;top:431.74px" width="8" height="8" viewBox="0 0 8 8"><path d="M4 0 L8 4 L4 8 L0 4 Z" fill="#717171"/></svg>
<span class="t" style="left:673.5px;top:431.00px;font-size:8.5px;color:#1e1e1e;font-weight:bold;-webkit-text-stroke:0;transform:scaleX(0.8383);">Program Output:</span>
<span class="t" style="left:732.5px;top:431.00px;font-size:8.5px;color:#1e1e1e;transform:scaleX(0.8212);">The thread 0x2d1c has exited with code 0 (0x0).</span>
<span class="t" style="left:901px;top:431.00px;font-size:8.5px;color:#1e1e1e;transform:scaleX(0.7757);">4,142.3</span>
<svg style="left:660px;top:443.92px" width="8" height="8" viewBox="0 0 8 8"><path d="M4 0 L8 4 L4 8 L0 4 Z" fill="#717171"/></svg>
<span class="t" style="left:673.5px;top:443.00px;font-size:8.5px;color:#1e1e1e;font-weight:bold;-webkit-text-stroke:0;transform:scaleX(0.8383);">Program Output:</span>
<span class="t" style="left:732.5px;top:443.00px;font-size:8.5px;color:#1e1e1e;transform:scaleX(0.8190);">The thread 0x3688 has exited with code 0 (0x0).</span>
<span class="t" style="left:901px;top:443.00px;font-size:8.5px;color:#1e1e1e;transform:scaleX(0.7757);">4,142.5</span>
<svg style="left:660px;top:456.10px" width="8" height="8" viewBox="0 0 8 8"><path d="M4 0 L8 4 L4 8 L0 4 Z" fill="#717171"/></svg>
<span class="t" style="left:673.5px;top:455.00px;font-size:8.5px;color:#1e1e1e;font-weight:bold;-webkit-text-stroke:0;transform:scaleX(0.8383);">Program Output:</span>
<span class="t" style="left:732.5px;top:455.00px;font-size:8.5px;color:#1e1e1e;transform:scaleX(0.8183);">The thread 0x730 has exited with code 0 (0x0).</span>
<span class="t" style="left:901px;top:455.00px;font-size:8.5px;color:#1e1e1e;transform:scaleX(0.7757);">4,143.0</span>
<svg style="left:660px;top:468.28px" width="8" height="8" viewBox="0 0 8 8"><path d="M4 0 L8 4 L4 8 L0 4 Z" fill="#717171"/></svg>
<span class="t" style="left:673.5px;top:468.00px;font-size:8.5px;color:#1e1e1e;font-weight:bold;-webkit-text-stroke:0;transform:scaleX(0.8383);">Program Output:</span>
<span class="t" style="left:732.5px;top:468.00px;font-size:8.5px;color:#1e1e1e;transform:scaleX(0.8190);">The thread 0x7a74 has exited with code 0 (0x0).</span>
<span class="t" style="left:901px;top:468.00px;font-size:8.5px;color:#1e1e1e;transform:scaleX(0.7757);">4,143.3</span>
<svg style="left:660px;top:480.46px" width="8" height="8" viewBox="0 0 8 8"><path d="M4 0 L8 4 L4 8 L0 4 Z" fill="#717171"/></svg>
<span class="t" style="left:673.5px;top:480.00px;font-size:8.5px;color:#1e1e1e;font-weight:bold;-webkit-text-stroke:0;transform:scaleX(0.8383);">Program Output:</span>
<span class="t" style="left:732.5px;top:480.00px;font-size:8.5px;color:#1e1e1e;transform:scaleX(0.8212);">The thread 0x349c has exited with code 0 (0x0).</span>
<span class="t" style="left:901px;top:480.00px;font-size:8.5px;color:#1e1e1e;transform:scaleX(0.7757);">4,154.9</span>
<svg style="left:660px;top:492.64px" width="8" height="8" viewBox="0 0 8 8"><path d="M4 0 L8 4 L4 8 L0 4 Z" fill="#717171"/></svg>
<span class="t" style="left:673.5px;top:492.00px;font-size:8.5px;color:#1e1e1e;font-weight:bold;-webkit-text-stroke:0;transform:scaleX(0.8383);">Program Output:</span>
<span class="t" style="left:732.5px;top:492.00px;font-size:8.5px;color:#1e1e1e;transform:scaleX(0.8190);">The thread 0x1418 has exited with code 0 (0x0).</span>
<span class="t" style="left:901px;top:492.00px;font-size:8.5px;color:#1e1e1e;transform:scaleX(0.7757);">4,288.5</span>
<svg style="left:660px;top:504.82px" width="8" height="8" viewBox="0 0 8 8"><path d="M4 0 L8 4 L4 8 L0 4 Z" fill="#717171"/></svg>
<span class="t" style="left:673.5px;top:504.00px;font-size:8.5px;color:#1e1e1e;font-weight:bold;-webkit-text-stroke:0;transform:scaleX(0.8383);">Program Output:</span>
<span class="t" style="left:732.5px;top:504.00px;font-size:8.5px;color:#1e1e1e;transform:scaleX(0.8212);">The thread 0x60c4 has exited with code 0 (0x0).</span>
<span class="t" style="left:901px;top:504.00px;font-size:8.5px;color:#1e1e1e;transform:scaleX(0.7757);">4,288.7</span>
<span class="t" style="left:4px;top:516.00px;font-size:8.5px;color:#ffffff;transform:scaleX(0.8102);">Call Stack</span>
<div style="left:4px;top:527px;width:31px;height:4px;background:#4D6082;"></div>
<span class="t" style="left:42px;top:516.00px;font-size:8.5px;color:#ffffff;transform:scaleX(0.8466);">Breakpoints</span>
<div style="left:42px;top:527px;width:38px;height:4px;background:#4D6082;"></div>
<span class="t" style="left:87px;top:516.00px;font-size:8.5px;color:#ffffff;transform:scaleX(0.8380);">Exception Settings</span>
<div style="left:87px;top:527px;width:59px;height:4px;background:#4D6082;"></div>
<span class="t" style="left:153px;top:516.00px;font-size:8.5px;color:#ffffff;transform:scaleX(0.8913);">Command Window</span>
<div style="left:153px;top:527px;width:64px;height:4px;background:#4D6082;"></div>
<span class="t" style="left:224px;top:516.00px;font-size:8.5px;color:#ffffff;transform:scaleX(0.8855);">Immediate Window</span>
<div style="left:224px;top:527px;width:64px;height:4px;background:#4D6082;"></div>
<span class="t" style="left:295px;top:516.00px;font-size:8.5px;color:#ffffff;transform:scaleX(0.9014);">Output</span>
<div style="left:295px;top:527px;width:23px;height:4px;background:#4D6082;"></div>
<span class="t" style="left:325px;top:516.00px;font-size:8.5px;color:#ffffff;transform:scaleX(0.8121);">Error List</span>
<div style="left:325px;top:527px;width:28px;height:4px;background:#4D6082;"></div>
<span class="t" style="left:360px;top:516.00px;font-size:8.5px;color:#ffffff;transform:scaleX(0.8208);">Test Results</span>
<div style="left:360px;top:527px;width:38px;height:4px;background:#4D6082;"></div>
<span class="t" style="left:405px;top:516.00px;font-size:8.5px;color:#ffffff;transform:scaleX(0.8741);">Autos</span>
<div style="left:405px;top:527px;width:19px;height:4px;background:#4D6082;"></div>
<span class="t" style="left:431px;top:516.00px;font-size:8.5px;color:#ffffff;transform:scaleX(0.8140);">Locals</span>
<div style="left:431px;top:527px;width:20px;height:4px;background:#4D6082;"></div>
<span class="t" style="left:459px;top:516.00px;font-size:8.5px;color:#ffffff;transform:scaleX(0.8425);">Watch 1</span>
<div style="left:459px;top:527px;width:26px;height:4px;background:#4D6082;"></div>
<div style="left:0px;top:531px;width:1024px;height:14px;background:#CA5100;"></div>
<svg style="left:2px;top:534.5px" width="11" height="8" viewBox="0 0 11 8"><path d="M2.5 0.6 H10.3 L8.5 7.4 H0.7 Z" fill="none" stroke="#fff" stroke-width="0.9"/></svg>
<span class="t" style="left:17px;top:534.00px;font-size:8.5px;color:#ffffff;transform:scaleX(0.7733);">Ready</span>
<svg style="left:828.5px;top:535px" width="7" height="7" viewBox="0 0 7 7"><path d="M3.5 7 V1 M0.7 3.5 L3.5 0.8 L6.3 3.5" fill="none" stroke="#fff" stroke-width="1.3"/></svg>
<span class="t" style="left:840px;top:535.00px;font-size:8.5px;color:#ffffff;transform:scaleX(0.8461);">0</span>
<svg style="left:859px;top:534.5px" width="7" height="7" viewBox="0 0 7 7"><path d="M0.8 6.2 L5.8 1.2" stroke="#fff" stroke-width="2"/></svg>
<span class="t" style="left:871px;top:535.00px;font-size:8.5px;color:#ffffff;transform:scaleX(0.8461);">0</span>
<svg style="left:888.5px;top:534px" width="9" height="9" viewBox="0 0 9 9"><path d="M4.5 0.3 L8.7 4.5 L4.5 8.7 L0.3 4.5 Z" fill="#fff"/><path d="M3 2.8 L5.5 5.3 M5.5 3.5 V6" stroke="#CA5100" stroke-width="0.9"/></svg>
<span class="t" style="left:902px;top:535.00px;font-size:8.5px;color:#ffffff;transform:scaleX(0.8165);">DLNA-Player</span>
<svg style="left:956.5px;top:534.5px" width="9" height="8" viewBox="0 0 9 8"><path d="M1.5 1.5 L4.5 4.5 L7.5 1.5 M4.5 4.5 V7.5" fill="none" stroke="#fff" stroke-width="1.3"/><circle cx="1.5" cy="1.5" r="1.3" fill="#fff"/><circle cx="7.5" cy="1.5" r="1.3" fill="#fff"/><circle cx="4.5" cy="7" r="1.1" fill="#fff"/></svg>
<span class="t" style="left:970px;top:535.00px;font-size:8.5px;color:#ffffff;transform:scaleX(0.8276);">master</span>
<svg style="left:995px;top:537px" width="6" height="3" viewBox="0 0 6 3"><path d="M0 3 L3 0 L6 3 Z" fill="#fff"/></svg>
<div style="left:654px;top:67px;width:351px;height:1px;background:#5f7191;"></div>
<svg style="left:975px;top:72.5px" width="6" height="4" viewBox="0 0 6 4"><path d="M0 0 H6 L3 3.2 Z" fill="#f0f0f0"/></svg>
<svg style="left:985px;top:71px" width="5" height="8" viewBox="0 0 5 8"><path d="M1.3 0.5 H3.7 V4.5 H1.3 Z M0 4.8 H5 M2.5 5 V8" fill="none" stroke="#f0f0f0" stroke-width="0.9"/></svg>
<svg style="left:994.5px;top:71.5px" width="7" height="6" viewBox="0 0 7 6"><path d="M0.5 0.3 L6.5 5.7 M6.5 0.3 L0.5 5.7" stroke="#f0f0f0" stroke-width="1"/></svg>
<div style="left:643.5px;top:70.5px;width:5px;height:1.2px;background:#f0f0f0;"></div>
<svg style="left:643.5px;top:72.5px" width="5" height="3" viewBox="0 0 5 3"><path d="M0 0 H5 L2.5 2.8 Z" fill="#f0f0f0"/></svg>
<span class="t" style="left:1017px;top:67.5px;font-size:8.5px;color:#ffffff;transform:rotate(90deg) scaleX(0.8419);">Solution Explorer</span>
<div style="left:1019.5px;top:67px;width:4px;height:57px;background:#4D6082;"></div>
<span class="t" style="left:1017px;top:129px;font-size:8.5px;color:#ffffff;transform:rotate(90deg) scaleX(0.8212);">Team Explorer</span>
<div style="left:1019.5px;top:128px;width:4px;height:48px;background:#4D6082;"></div>
</body></html>
